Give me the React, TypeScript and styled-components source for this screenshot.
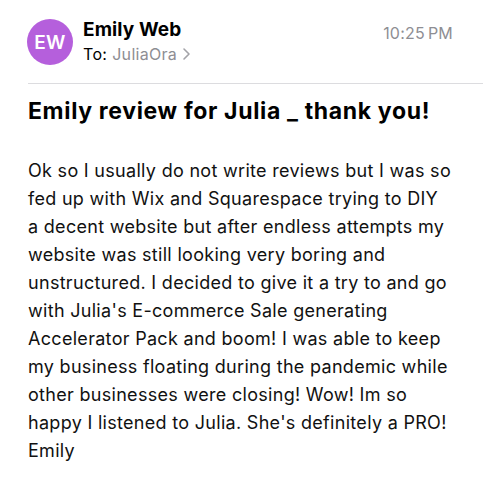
import React from "react";
import styled, { createGlobalStyle } from "styled-components";

const Global = createGlobalStyle`
  html, body { margin: 0; padding: 0; background: #ffffff; }
  body { font-family: Inter, "Noto Sans", "Liberation Sans", sans-serif; color: #000; -webkit-font-smoothing: antialiased; }
`;

const Page = styled.div`
  width: 483px;
  height: 480px;
  overflow: hidden;
  background: #fff;
`;

const Header = styled.div`
  display: flex;
  align-items: flex-start;
  padding: 19px 30px 0 27px;
  height: 64px;
  box-sizing: border-box;
`;

const Avatar = styled.div`
  width: 46px;
  height: 46px;
  border-radius: 50%;
  background: #b55fdc;
  color: #fff;
  font-weight: 600;
  font-size: 19px;
  display: flex;
  align-items: center;
  justify-content: center;
  flex-shrink: 0;
  letter-spacing: 0.2px;
`;

const Meta = styled.div`
  display: flex;
  flex-direction: column;
  margin-left: 10px;
  flex: 1;
`;

const Name = styled.div`
  font-size: 19px;
  font-weight: 700;
  line-height: 22px;
  letter-spacing: 0.1px;
`;

const ToLine = styled.div`
  font-size: 16px;
  line-height: 20px;
  margin-top: 3px;
  display: flex;
  align-items: center;
  gap: 5px;
  letter-spacing: 0.3px;
`;

const Recipient = styled.span`
  color: #8e8e93;
`;

const Time = styled.div`
  font-size: 16px;
  color: #8e8e93;
  line-height: 20px;
  margin-top: 4px;
  letter-spacing: 0.2px;
`;

const Divider = styled.div`
  height: 1px;
  background: #dcdcdf;
  margin: 19px 0 0 28px;
`;

const Subject = styled.h1`
  margin: 0;
  padding: 12px 20px 0 28px;
  font-size: 23px;
  font-weight: 700;
  line-height: 30px;
  letter-spacing: 0.65px;
  white-space: nowrap;
`;

const Body = styled.p`
  margin: 0;
  padding: 31px 20px 0 28px;
  font-size: 18px;
  line-height: 28px;
  letter-spacing: 0.3px;
  color: #111;
  white-space: nowrap;
`;

const Chevron = () => (
  <svg width="9" height="14" viewBox="0 0 9 14" fill="none">
    <path d="M2 2l5 5-5 5" stroke="#a3a3a8" strokeWidth="1.6" strokeLinecap="round" strokeLinejoin="round" />
  </svg>
);

const lines = [
  "Ok so I usually do not write reviews but I was so",
  "fed up with Wix and Squarespace trying to DIY",
  "a decent website but after endless attempts my",
  "website was still looking very boring and",
  "unstructured. I decided to give it a try to and go",
  "with Julia's E-commerce Sale generating",
  "Accelerator Pack and boom! I was able to keep",
  "my business floating during the pandemic while",
  "other businesses were closing! Wow! Im so",
  "happy I listened to Julia. She's definitely a PRO!",
  "Emily",
];

export default function App() {
  return (
    <Page>
      <Global />
      <Header>
        <Avatar>EW</Avatar>
        <Meta>
          <Name>Emily Web</Name>
          <ToLine>
            To: <Recipient>JuliaOra</Recipient>
            <Chevron />
          </ToLine>
        </Meta>
        <Time>10:25&#8201;PM</Time>
      </Header>
      <Divider />
      <Subject>Emily review for Julia _ thank you!</Subject>
      <Body>
        {lines.map((l, i) => (
          <React.Fragment key={i}>
            {l}
            {i < lines.length - 1 && <br />}
          </React.Fragment>
        ))}
      </Body>
    </Page>
  );
}
